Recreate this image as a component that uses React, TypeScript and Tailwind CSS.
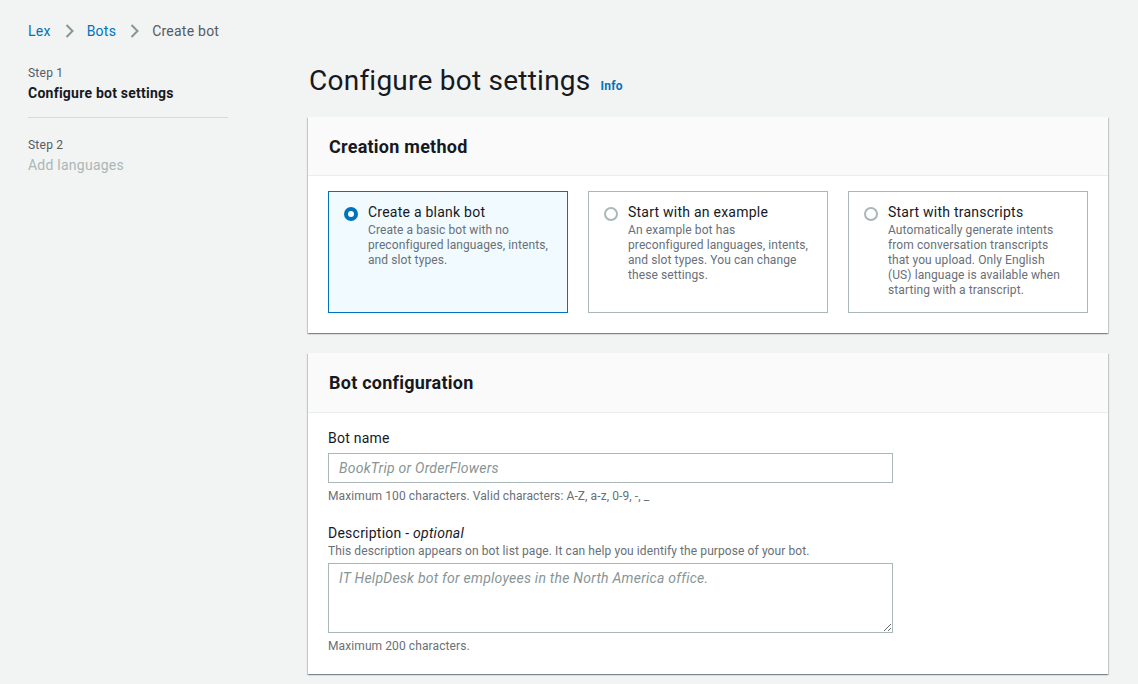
import { useState } from "react";

const font = { fontFamily: "Roboto, 'Noto Sans', sans-serif" };

const Chevron = () => (
    <svg width="16" height="16" viewBox="0 0 16 16" fill="none" className="mx-[10px]">
        <path d="M5.5 2l6 6-6 6" stroke="#879596" strokeWidth="2" />
    </svg>
);

type Tile = { id: string; title: string; lines: string[] };

const tiles: Tile[] = [
    { id: "blank", title: "Create a blank bot", lines: ["Create a basic bot with no", "preconfigured languages, intents,", "and slot types."] },
    { id: "example", title: "Start with an example", lines: ["An example bot has", "preconfigured languages, intents,", "and slot types. You can change", "these settings."] },
    {
        id: "transcripts",
        title: "Start with transcripts",
        lines: ["Automatically generate intents", "from conversation transcripts", "that you upload. Only English", "(US) language is available when", "starting with a transcript."],
    },
];

const Radio = ({ checked }: { checked: boolean }) =>
    checked ? (
        <span className="mt-[6px] w-[14px] h-[14px] rounded-full bg-[#0073bb] flex items-center justify-center shrink-0">
            <span className="w-[6px] h-[6px] rounded-full bg-white" />
        </span>
    ) : (
        <span className="mt-[6px] w-[14px] h-[14px] rounded-full border-2 border-[#aab7b8] bg-white shrink-0" />
    );

const cardShadow = "bg-white shadow-[0_1px_1px_0_rgba(0,28,36,0.3),1px_1px_1px_0_rgba(0,28,36,0.15),-1px_1px_1px_0_rgba(0,28,36,0.15)]";

export default function App() {
    const [method, setMethod] = useState("blank");

    return (
        <div className="min-h-screen w-full bg-[#f2f3f3] text-[#16191f] flex tracking-[0.015em]" style={font}>
            <div className="w-[308px] shrink-0 pl-[28px] pt-[21px]">
                <div className="flex items-center text-[14px] leading-[20px]">
                    <span className="text-[#0073bb]">Lex</span>
                    <Chevron />
                    <span className="text-[#0073bb]">Bots</span>
                    <Chevron />
                    <span className="text-[#545b64]">Create bot</span>
                </div>
                <div className="mt-[24px] w-[200px]">
                    <div className="text-[12px] leading-[16px] text-[#545b64]">Step 1</div>
                    <div className="text-[14px] leading-[20px] font-bold mt-[2px]">Configure bot settings</div>
                    <div className="border-t border-[#d5dbdb] mt-[14px]" />
                    <div className="text-[12px] leading-[16px] text-[#545b64] mt-[19px]">Step 2</div>
                    <div className="text-[14px] leading-[20px] text-[#aab7b8] mt-[2px]">Add languages</div>
                </div>
            </div>

            <div className="w-[800px] pt-[63px]">
                <div className="flex items-baseline gap-[10px] pl-[1px]">
                    <h1 className="text-[28px] leading-[36px] font-normal">Configure bot settings</h1>
                    <a className="text-[12px] font-bold text-[#0073bb]">Info</a>
                </div>

                <div className={"mt-[18px] " + cardShadow}>
                    <div className="bg-[#fafafa] border-b border-[#eaeded] h-[59px] px-[21px] flex items-center">
                        <h2 className="text-[18px] font-bold">Creation method</h2>
                    </div>
                    <div className="p-[20px] grid grid-cols-3 gap-[20px] pt-[15px]">
                        {tiles.map((t) => {
                            const sel = method === t.id;
                            return (
                                <div
                                    key={t.id}
                                    onClick={() => setMethod(t.id)}
                                    className={
                                        sel
                                            ? "h-[122px] border border-[#0073bb] bg-[#f1faff] px-[15px] pt-[9px] flex gap-[10px] cursor-pointer"
                                            : "h-[122px] border border-[#aab7b8] bg-white px-[15px] pt-[9px] flex gap-[10px] cursor-pointer"
                                    }
                                >
                                    <Radio checked={sel} />
                                    <div>
                                        <div className="text-[14px] leading-[22px]">{t.title}</div>
                                        <div className="text-[12px] leading-[15px] text-[#687078] tracking-[0.008em] whitespace-nowrap">
                                            {t.lines.map((l) => (
                                                <span key={l} className="block">{l}</span>
                                            ))}
                                        </div>
                                    </div>
                                </div>
                            );
                        })}
                    </div>
                </div>

                <div className={"mt-[20px] " + cardShadow}>
                    <div className="bg-[#fafafa] border-b border-[#eaeded] h-[60px] px-[21px] flex items-center">
                        <h2 className="text-[18px] font-bold">Bot configuration</h2>
                    </div>
                    <div className="px-[20px] pt-[15px] pb-[20px]">
                        <label className="block text-[14px] leading-[20px]">Bot name</label>
                        <input
                            className="mt-[5px] w-[565px] h-[30px] border border-[#aab7b8] px-[10px] text-[14px] placeholder:italic placeholder:text-[#879596] outline-none"
                            placeholder="BookTrip or OrderFlowers"
                        />
                        <div className="text-[12px] leading-[16px] text-[#687078] tracking-[0.008em] mt-[5px]">
                            Maximum 100 characters. Valid characters: A-Z, a-z, 0-9, -, _
                        </div>

                        <label className="block text-[14px] leading-[20px] mt-[19px]">
                            Description - <i>optional</i>
                        </label>
                        <div className="text-[12px] leading-[16px] text-[#687078] tracking-[0.008em]">
                            This description appears on bot list page. It can help you identify the purpose of your bot.
                        </div>
                        <textarea
                            className="mt-[4px] block w-[565px] h-[70px] border border-[#aab7b8] px-[10px] py-[4px] text-[14px] placeholder:italic placeholder:text-[#879596] outline-none"
                            placeholder="IT HelpDesk bot for employees in the North America office."
                        />
                        <div className="text-[12px] leading-[16px] text-[#687078] tracking-[0.008em] mt-[5px]">Maximum 200 characters.</div>
                    </div>
                </div>
            </div>
        </div>
    );
}
